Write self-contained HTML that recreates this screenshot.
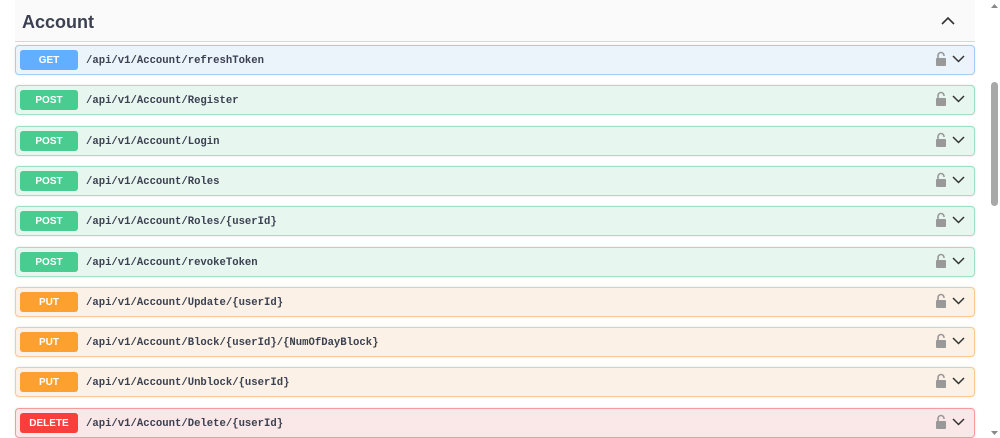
<!DOCTYPE html>
<html><head><style>
body{margin:0;width:1000px;height:438px;overflow:hidden;background:#fff;font-family:"Liberation Sans",sans-serif;position:relative}
.hdr{position:absolute;left:15px;top:0;width:960px;height:41px;border-bottom:1px solid #d5d8db;background:#fafafa}
.hdr h{position:absolute;left:7px;top:12px;font-size:18px;font-weight:bold;color:#3b4151}
.hdr svg{position:absolute;left:925px;top:15px}
.row{position:absolute;left:15px;width:958px;height:28px;border:1px solid;border-radius:4px;box-shadow:0 0 2px rgba(0,0,0,.12)}
.b{position:absolute;left:4px;top:4px;width:58px;height:20px;border-radius:3px;color:#fff;font-weight:bold;font-size:10px;text-align:center;line-height:21px}
.p{position:absolute;left:70px;top:9px;font-family:"Liberation Mono",monospace;font-weight:bold;font-size:10.6px;color:#3b4151}
.ic{position:absolute;left:918px;top:3px}
.get .b{background:#61affe}
.post{background:#e8f6f0;border-color:#9fe0c2}.post .b{background:#49cc90}
.put{background:#fbf1e6;border-color:#fcca8f}.put .b{background:#fca130}
.del{background:#fae7e7;border-color:#f49b9b}.del .b{background:#f93e3e}
.get{background:#ebf3fb;border-color:#a7cdf6}
.sb{position:absolute;left:989px;top:0;width:11px;height:438px;background:#fff}
.th{position:absolute;left:991px;top:82px;width:7px;height:124px;background:#a8a8a8;border-radius:4px}
</style></head><body>
<div class="hdr"><h>Account</h><svg width="16" height="12" viewBox="0 0 16 12"><path d="M2 9L8 3L14 9" fill="none" stroke="#333" stroke-width="1.6"/></svg></div>
<div class="sb"></div><div class="th"></div>
<svg style="position:absolute;left:990px;top:3px" width="9" height="6"><path d="M1 5L4.5 1L8 5Z" fill="#888"/></svg>
<svg style="position:absolute;left:990px;top:430px" width="9" height="6"><path d="M1 1L4.5 5L8 1Z" fill="#888"/></svg>
<div id="rows"></div>
<script>
var d=[["get","GET","/api/v1/Account/refreshToken"],["post","POST","/api/v1/Account/Register"],["post","POST","/api/v1/Account/Login"],["post","POST","/api/v1/Account/Roles"],["post","POST","/api/v1/Account/Roles/{userId}"],["post","POST","/api/v1/Account/revokeToken"],["put","PUT","/api/v1/Account/Update/{userId}"],["put","PUT","/api/v1/Account/Block/{userId}/{NumOfDayBlock}"],["put","PUT","/api/v1/Account/Unblock/{userId}"],["del","DELETE","/api/v1/Account/Delete/{userId}"]];
var h="";d.forEach(function(r,i){var t=45+Math.round(i*40.3);
h+='<div class="row '+r[0]+'" style="top:'+t+'px"><div class="b">'+r[1]+'</div><div class="p">'+r[2]+'</div><svg class="ic" width="36" height="20" viewBox="0 0 36 20"><path d="M4 9V6.5a3 3 0 0 1 6 0V7" fill="none" stroke="#999" stroke-width="1.6"/><rect x="2" y="9" width="10" height="8" rx="1" fill="#999"/><path d="M19 7L24.5 12.5L30 7" fill="none" stroke="#333" stroke-width="1.5"/></svg></div>';});
document.getElementById("rows").innerHTML=h;
</script>
</body></html>
